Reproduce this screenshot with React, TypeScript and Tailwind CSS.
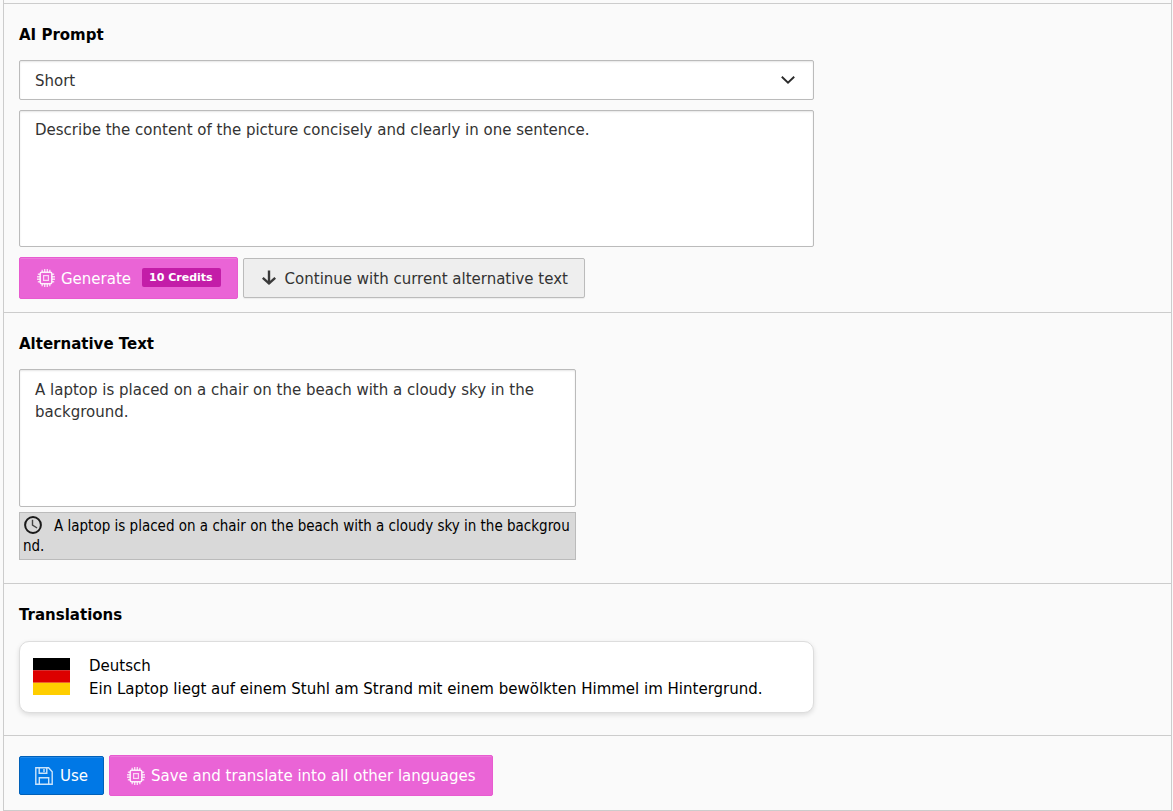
import React, { useState } from 'react';

const FIELD =
  'block w-full rounded-xs border border-[#bbbbbb] bg-white px-[15px] text-[#333333] shadow-[inset_0_1px_2px_rgba(0,0,0,0.1)] outline-none focus:border-[#0078e6]';
const PINK_BUTTON =
  'inline-flex items-center rounded-xs border border-[#e85bd0] bg-[#ea64d6] px-4 text-white shadow-[inset_0_1px_0_rgba(255,255,255,0.15)]';

function ChipIcon() {
  return (
    <svg aria-hidden="true" viewBox="0 0 18 18" className="size-[18px] shrink-0" fill="none" stroke="currentColor">
      <rect x="3.2" y="3.2" width="11.6" height="11.6" rx="1.5" strokeWidth="1.5" opacity="0.9" />
      <rect x="6.6" y="6.6" width="4.8" height="4.8" strokeWidth="1.2" opacity="0.75" />
      <path
        d="M5.2 0.8V3M7.7 0v3M10.3 0v3M12.8 0.8V3M5.2 15v2.2M7.7 15v3M10.3 15v3M12.8 15v2.2M0.8 5.2H3M0 7.7h3M0 10.3h3M0.8 12.8H3M15 5.2h2.2M15 7.7h3M15 10.3h3M15 12.8h2.2"
        strokeWidth="1.4"
        opacity="0.75"
      />
    </svg>
  );
}

function ChevronIcon() {
  return (
    <svg aria-hidden="true" viewBox="0 0 14 8" className="h-2 w-3.5" fill="none" stroke="#2b2b2b" strokeWidth="1.9">
      <path d="M0.8 0.8L7 6.6L13.2 0.8" />
    </svg>
  );
}

function ArrowDownIcon() {
  return (
    <svg aria-hidden="true" viewBox="0 0 18 18" className="size-[18px] shrink-0" fill="none" stroke="#3a3a3a">
      <path d="M9 1.5v13" strokeWidth="2.4" />
      <path d="M2.8 8.8L9 14.4l6.2-5.6" strokeWidth="2.4" />
    </svg>
  );
}

function ClockIcon() {
  return (
    <svg aria-hidden="true" viewBox="0 0 18 18" className="mr-3 ml-px inline-block size-[18px] align-[-3px]" fill="none">
      <circle cx="9" cy="9" r="7.9" stroke="#1a1a1a" strokeWidth="2" />
      <path d="M8.5 3.8v5.4l4.6 2.8" stroke="#444444" strokeWidth="1.4" />
    </svg>
  );
}

function SaveIcon() {
  return (
    <svg aria-hidden="true" viewBox="0 0 18 18" className="size-[18px] shrink-0" fill="none" stroke="currentColor" opacity="0.8">
      <path d="M0.8 0.8h12.8l3.6 4v12.4H0.8z" strokeWidth="1.4" />
      <path d="M4.2 0.8v5.4h7.6V0.8M9 2v3" strokeWidth="1.4" />
      <path d="M4.3 17.2v-6.4h9.4v6.4" strokeWidth="1.4" />
    </svg>
  );
}

function GermanFlag() {
  return (
    <svg role="img" aria-label="Deutsch" viewBox="0 0 37 37" className="mt-[3px] size-[37px] shrink-0">
      <path fill="#000000" d="M0 0h37v12.33H0z" />
      <path fill="#dd0000" d="M0 12.33h37v12.34H0z" />
      <path fill="#ffce00" d="M0 24.67h37V37H0z" />
    </svg>
  );
}

export default function App() {
  const [prompt, setPrompt] = useState(
    'Describe the content of the picture concisely and clearly in one sentence.',
  );
  const [altText, setAltText] = useState(
    'A laptop is placed on a chair on the beach with a cloudy sky in the background.',
  );

  return (
    <main className="bg-[#fafafa] pr-px pl-[3px] font-['Verdana','DejaVu_Sans',sans-serif] text-[15px] leading-[22px] text-black">
      <div className="border-x border-b border-[#cccccc] pt-[3px]">
        <section className="border-t border-[#cccccc] px-[15px] pt-[21px] pb-[13px]">
          <h2 className="mb-[15px] leading-5 font-bold">AI Prompt</h2>
          <div className="max-w-[795px]">
            <div className="mb-2.5 grid items-center">
              <select aria-label="Prompt type" className={`${FIELD} col-start-1 row-start-1 h-10 appearance-none pt-0.5`}>
                <option>Short</option>
              </select>
              <span className="pointer-events-none col-start-1 row-start-1 mr-[19px] justify-self-end">
                <ChevronIcon />
              </span>
            </div>
            <textarea
              aria-label="Prompt"
              className={`${FIELD} h-[137px] resize-none py-2`}
              value={prompt}
              onChange={(e) => setPrompt(e.target.value)}
            />
          </div>
          <div className="mt-2.5 flex flex-wrap items-center gap-[5px]">
            <button type="button" className={`${PINK_BUTTON} h-[42px]`}>
              <span className="mr-1.5 ml-px">
                <ChipIcon />
              </span>
              <span className="pt-0.5">Generate</span>
              <span className="mb-px ml-[11px] rounded-xs bg-[#c31da8] pr-2 pl-[7px] text-[11px] leading-[19px] font-bold">
                10 Credits
              </span>
            </button>
            <button
              type="button"
              className="inline-flex h-10 items-center gap-[7px] rounded-xs border border-[#bbbbbb] bg-[#eeeeee] px-4 text-[#333333] shadow-[0_1px_1px_rgba(0,0,0,0.06)]"
            >
              <ArrowDownIcon />
              <span className="pt-0.5">Continue with current alternative text</span>
            </button>
          </div>
        </section>

        <section className="border-t border-[#cccccc] px-[15px] pt-[21px] pb-[23px]">
          <h2 className="mb-[15px] leading-5 font-bold">Alternative Text</h2>
          <div className="max-w-[557px]">
            <textarea
              aria-label="Alternative text"
              className={`${FIELD} h-[138px] resize-none py-[9px]`}
              value={altText}
              onChange={(e) => setAltText(e.target.value)}
            />
            <p className="mt-[5px] border border-[#bbbbbb] bg-[#d9d9d9] py-[3px] pr-0.5 pl-[3px] font-['DejaVu_Sans_Condensed','DejaVu_Sans',sans-serif] text-[15px] leading-5 break-all">
              <ClockIcon />
              A laptop is placed on a chair on the beach with a cloudy sky in the background.
            </p>
          </div>
        </section>

        <section className="border-t border-[#cccccc] px-[15px] pt-[21px] pb-[22px]">
          <h2 className="mb-4 leading-5 font-bold">Translations</h2>
          <div className="flex max-w-[795px] items-start gap-[19px] rounded-[10px] border border-[#dddddd] bg-white px-[13px] pt-[13px] pb-[11px] shadow-[0_2px_5px_rgba(0,0,0,0.12)]">
            <GermanFlag />
            <p className="leading-[23px]">
              Deutsch
              <br />
              Ein Laptop liegt auf einem Stuhl am Strand mit einem bewölkten Himmel im Hintergrund.
            </p>
          </div>
        </section>

        <section className="flex flex-wrap items-center gap-[5px] border-t border-[#cccccc] px-[15px] pt-[19px] pb-3.5">
          <button
            type="button"
            className="inline-flex h-[39px] items-center gap-[7px] rounded-xs border border-[#0060b8] bg-[#0078e6] px-[15px] text-white shadow-[inset_0_1px_0_rgba(255,255,255,0.12)]"
          >
            <SaveIcon />
            Use
          </button>
          <button type="button" className={`${PINK_BUTTON} h-[41px]`}>
            <span className="mr-1.5 ml-px">
              <ChipIcon />
            </span>
            Save and translate into all other languages
          </button>
        </section>
      </div>
    </main>
  );
}
